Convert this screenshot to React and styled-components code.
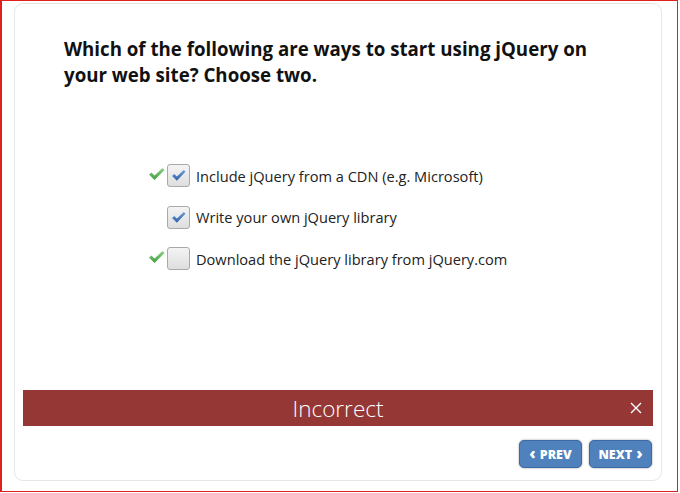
import React from 'react'
import styled, { createGlobalStyle } from 'styled-components'

const Global = createGlobalStyle`
  body {
    margin: 0;
    background: #fff;
    font-family: "Open Sans", "DejaVu Sans", sans-serif;
  }
`

const options = [
  { text: 'Include jQuery from a CDN (e.g. Microsoft)', checked: true, correct: true },
  { text: 'Write your own jQuery library', checked: true, correct: false },
  { text: 'Download the jQuery library from jQuery.com', checked: false, correct: true },
]

function GreenTick() {
  return (
    <svg width="17" height="14" viewBox="0 0 17 14">
      <defs>
        <linearGradient id="gt" x1="0" y1="0" x2="0" y2="1">
          <stop offset="0" stopColor="#8fd08a" />
          <stop offset="1" stopColor="#3e9d3a" />
        </linearGradient>
      </defs>
      <path d="M1 7.5 L3.5 5.5 L6.5 8.5 L14.5 1 L16.5 3 L6.5 13 Z" fill="url(#gt)" />
    </svg>
  )
}

function BlueTick() {
  return (
    <svg width="15" height="13" viewBox="0 0 14 12">
      <defs>
        <linearGradient id="bt" x1="0" y1="0" x2="0" y2="1">
          <stop offset="0" stopColor="#6d9bd6" />
          <stop offset="1" stopColor="#2f63a8" />
        </linearGradient>
      </defs>
      <path d="M1 6.5 L3 4.5 L5.5 7 L12 0.8 L13.5 2.5 L5.5 11 Z" fill="url(#bt)" />
    </svg>
  )
}

function App() {
  return (
    <Frame>
      <Global />
      <Card>
        <Question>
          Which of the following are ways to start using jQuery on your web site? Choose two.
        </Question>
        <Options>
          {options.map((o) => (
            <Row key={o.text}>
              <Mark>{o.correct && <GreenTick />}</Mark>
              <Box>{o.checked && <BlueTick />}</Box>
              <Label>{o.text}</Label>
            </Row>
          ))}
        </Options>
        <Feedback>
          Incorrect
          <Close>
            <svg width="12" height="12" viewBox="0 0 12 12">
              <path d="M1 1 L11 11 M11 1 L1 11" stroke="#fff" strokeWidth="1.4" />
            </svg>
          </Close>
        </Feedback>
        <Nav>
          <NavButton>
            <Chevron>‹</Chevron> PREV
          </NavButton>
          <NavButton>
            NEXT <Chevron>›</Chevron>
          </NavButton>
        </Nav>
      </Card>
    </Frame>
  )
}

export default App

const Frame = styled.div`
  width: 678px;
  height: 492px;
  box-sizing: border-box;
  border: 1px solid #e02020;
  border-left-width: 2px;
  padding: 2px 15px 10px 12px;
`
const Card = styled.div`
  height: 478px;
  box-sizing: border-box;
  border: 1px solid #e6e6e6;
  border-radius: 9px;
  padding: 32px 8px 12px 8px;
  display: flex;
  flex-direction: column;
`
const Question = styled.h1`
  margin: 0 30px 0 41px;
  font-size: 18.7px;
  line-height: 26px;
  font-weight: 700;
  color: #111;
`
const Options = styled.div`
  margin-top: 67px;
  padding-left: 125px;
  display: flex;
  flex-direction: column;
`
const Row = styled.div`
  height: 41.5px;
  display: flex;
  align-items: center;
`
const Mark = styled.span`
  width: 19px;
  height: 14px;
  display: flex;
  margin-top: -4px;
`
const Box = styled.span`
  width: 21px;
  height: 21px;
  border: 1px solid #a9a9a9;
  border-radius: 3px;
  background: linear-gradient(#f4f4f4, #dedede);
  display: flex;
  align-items: center;
  justify-content: center;
`
const Label = styled.span`
  margin-left: 6px;
  font-size: 14.6px;
  color: #222;
`
const Feedback = styled.div`
  margin-top: auto;
  height: 36px;
  background: #953735;
  color: #fff;
  font-size: 22.5px;
  font-weight: 300;
  display: flex;
  align-items: center;
  justify-content: center;
  position: relative;
`
const Close = styled.span`
  position: absolute;
  right: 11px;
  top: 12px;
  display: flex;
`
const Nav = styled.div`
  margin-top: 14px;
  padding-right: 1px;
  display: flex;
  justify-content: flex-end;
  gap: 7px;
`
const NavButton = styled.button`
  width: 63px;
  height: 28px;
  padding: 0;
  border: 1px solid #3d6aa4;
  border-radius: 5px;
  background: #4f81bd;
  box-shadow: 0 0 2px rgba(0, 0, 0, 0.45);
  color: #fff;
  font-family: "Open Sans", sans-serif;
  font-size: 12.5px;
  font-weight: 800;
  display: flex;
  align-items: center;
  justify-content: center;
  gap: 4px;
`
const Chevron = styled.span`
  font-size: 16px;
  font-weight: 800;
  line-height: 1;
  margin-top: -2px;
`
